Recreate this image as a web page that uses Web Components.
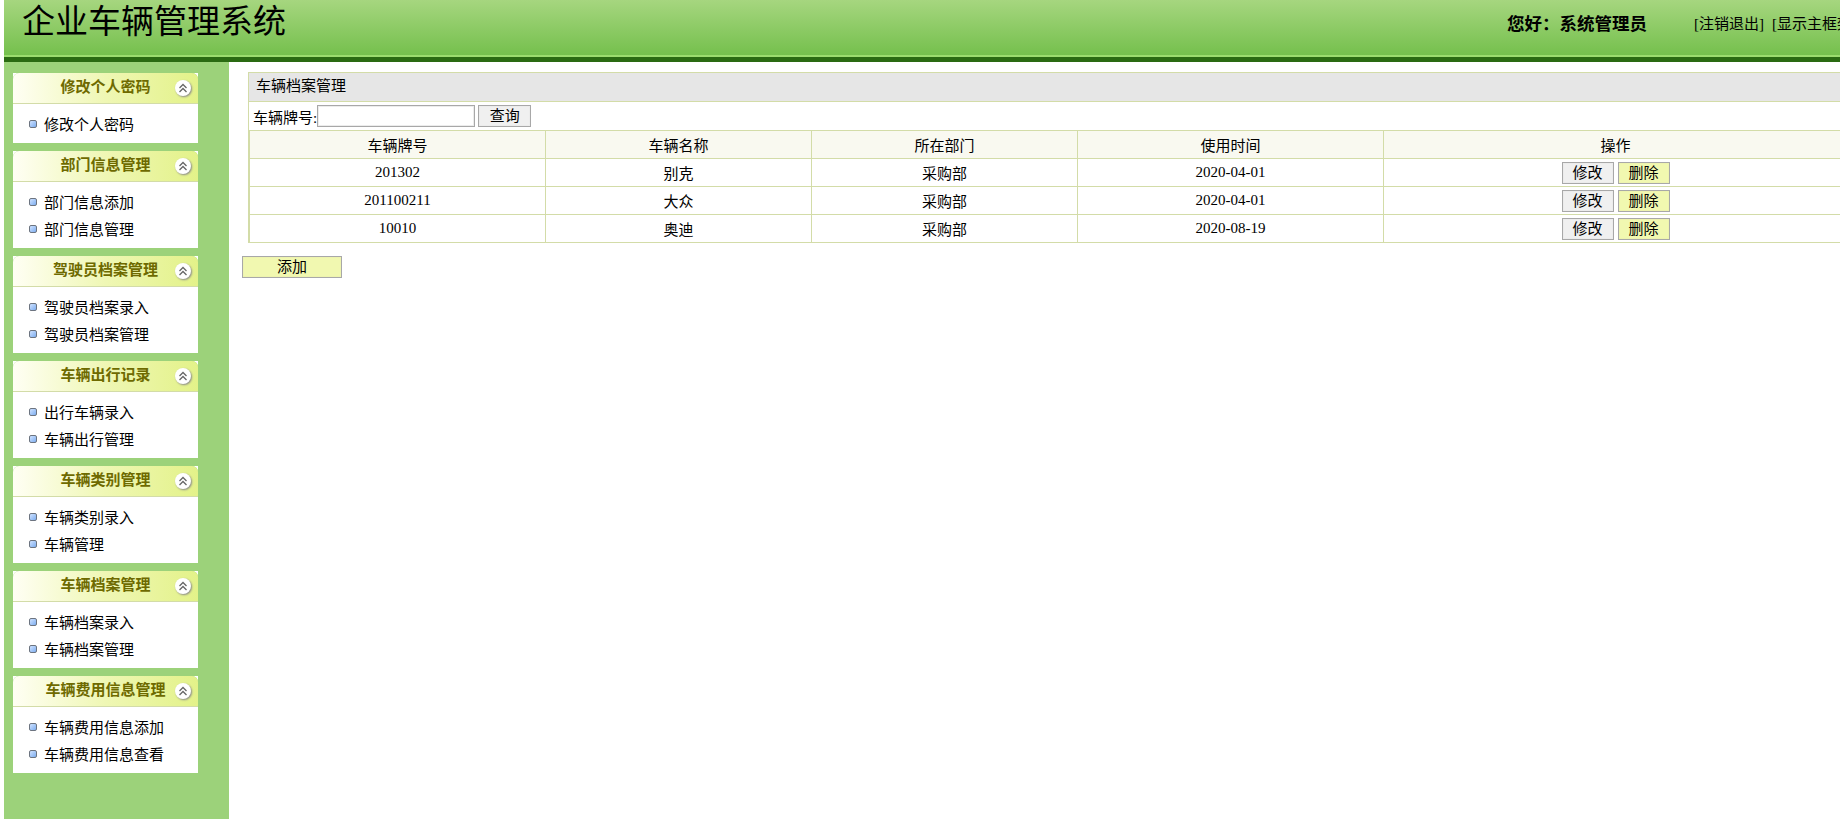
<!DOCTYPE html>
<html lang="zh">
<head>
<meta charset="utf-8">
<title>企业车辆管理系统</title>
<style>
    html, body { margin: 0; height: 100%; overflow: hidden; background: #fff; }
    body { font: 15px "Liberation Serif", "Noto Sans CJK SC", serif; color: #000; }
</style>
</head>
<body>
<app-shell>
    <app-header slot="header" system="企业车辆管理系统" user="系统管理员"></app-header>
    <side-menu slot="side">
        <side-panel heading="修改个人密码">
            <side-item>修改个人密码</side-item>
        </side-panel>
        <side-panel heading="部门信息管理">
            <side-item>部门信息添加</side-item>
            <side-item>部门信息管理</side-item>
        </side-panel>
        <side-panel heading="驾驶员档案管理">
            <side-item>驾驶员档案录入</side-item>
            <side-item>驾驶员档案管理</side-item>
        </side-panel>
        <side-panel heading="车辆出行记录">
            <side-item>出行车辆录入</side-item>
            <side-item>车辆出行管理</side-item>
        </side-panel>
        <side-panel heading="车辆类别管理">
            <side-item>车辆类别录入</side-item>
            <side-item>车辆管理</side-item>
        </side-panel>
        <side-panel heading="车辆档案管理">
            <side-item>车辆档案录入</side-item>
            <side-item>车辆档案管理</side-item>
        </side-panel>
        <side-panel heading="车辆费用信息管理">
            <side-item>车辆费用信息添加</side-item>
            <side-item>车辆费用信息查看</side-item>
        </side-panel>
    </side-menu>
    <vehicle-list>
        <vehicle-row head plate="车辆牌号" name="车辆名称" dept="所在部门" date="使用时间"></vehicle-row>
        <vehicle-row plate="201302" name="别克" dept="采购部" date="2020-04-01"></vehicle-row>
        <vehicle-row plate="201100211" name="大众" dept="采购部" date="2020-04-01"></vehicle-row>
        <vehicle-row plate="10010" name="奥迪" dept="采购部" date="2020-08-19"></vehicle-row>
    </vehicle-list>
</app-shell>

<script>
const btnStyle = `
    .btn {
        box-sizing: border-box;
        height: 22px;
        padding: 0;
        font: inherit;
        line-height: 18px;
        color: #000;
        border: 1px solid #a8a8a8;
        box-shadow: inset 0 0 0 1px #ececec;
        background: #f0f0f0;
    }
    .btn.yellow { background: #f1f8b0; box-shadow: inset 0 0 0 1px #eef4ae; }
`

class AppShell extends HTMLElement {
    constructor() {
        super()
        this.attachShadow({ mode: 'open' })
        this.shadowRoot.innerHTML = `
            <style>
                :host { display: flex; flex-direction: column; height: 100vh; padding-left: 4px; box-sizing: border-box; }
                .body { flex: 1; display: flex; min-height: 0; }
                main { flex: 1; min-width: 0; }
            </style>
            <slot name="header"></slot>
            <div class="body">
                <slot name="side"></slot>
                <main><slot></slot></main>
            </div>
        `
    }
}

class AppHeader extends HTMLElement {
    constructor() {
        super()
        this.attachShadow({ mode: 'open' })
        this.shadowRoot.innerHTML = `
            <style>
                :host {
                    display: flex;
                    justify-content: space-between;
                    box-sizing: border-box;
                    height: 62px;
                    padding-left: 18px;
                    overflow: hidden;
                    white-space: nowrap;
                    background: linear-gradient(#a6d67f, #75c04d 55px);
                    border-bottom: 5px solid #2a6a12;
                    box-shadow: inset 0 -2px 0 #9bdc6e;
                }
                h1 { margin: 0; font-size: 33px; font-weight: 400; line-height: 44px; }
                .right { display: flex; flex: none; width: 333px; padding-top: 14px; line-height: 20px; }
                b { font-size: 17.5px; width: 187px; flex: none; }
                span { flex: none; }
                .gap { width: 8px; }
            </style>
            <h1>${this.getAttribute('system')}</h1>
            <div class="right">
                <b>您好：系统管理员</b>
                <span>[注销退出]</span><span class="gap"></span><span>[显示主框架]</span>
            </div>
        `
    }
}

class SideMenu extends HTMLElement {
    constructor() {
        super()
        this.attachShadow({ mode: 'open' })
        this.shadowRoot.innerHTML = `
            <style>
                :host {
                    display: flex;
                    flex-direction: column;
                    gap: 8px;
                    flex: none;
                    box-sizing: border-box;
                    width: 225px;
                    padding: 11px 31px 0 9px;
                    background: #9cd27a;
                }
            </style>
            <slot></slot>
        `
    }
}

class SidePanel extends HTMLElement {
    constructor() {
        super()
        this.attachShadow({ mode: 'open' })
        this.shadowRoot.innerHTML = `
            <style>
                :host { display: block; background: #fff; }
                .title {
                    position: relative;
                    box-sizing: border-box;
                    height: 31px;
                    line-height: 29px;
                    text-align: center;
                    font-weight: 700;
                    color: #6e6a00;
                    border-radius: 6px 6px 0 0;
                    background: #9cd27a linear-gradient(90deg, #fffff4, #eff7b4 50%, #e3f289);
                    border-bottom: 1px solid #d3dca8;
                }
                .toggle {
                    position: absolute;
                    right: 7px;
                    top: 7px;
                    width: 16px;
                    height: 16px;
                    border-radius: 50%;
                    background: #fff;
                    box-shadow: 1px 1px 2px #8a8a8a;
                }
                svg { display: block; }
                .items { padding: 6px 0; }
            </style>
            <div class="title">
                ${this.getAttribute('heading')}
                <span class="toggle">
                    <svg width="16" height="16" viewBox="0 0 16 16" fill="none" stroke="#666" stroke-width="1.3">
                        <path d="M4.5 8 8 4.5 11.5 8M4.5 12 8 8.5 11.5 12"/>
                    </svg>
                </span>
            </div>
            <div class="items"><slot></slot></div>
        `
    }
}

class SideItem extends HTMLElement {
    constructor() {
        super()
        this.attachShadow({ mode: 'open' })
        this.shadowRoot.innerHTML = `
            <style>
                :host { display: flex; align-items: center; gap: 7px; height: 27px; padding-left: 16px; }
                i {
                    flex: none;
                    box-sizing: border-box;
                    width: 8px;
                    height: 8px;
                    border: 1px solid #6c7480;
                    border-radius: 2px;
                    background: linear-gradient(135deg, #cfe2ff, #7eaef0);
                }
            </style>
            <i></i><slot></slot>
        `
    }
}

class VehicleList extends HTMLElement {
    constructor() {
        super()
        this.attachShadow({ mode: 'open' })
        this.shadowRoot.innerHTML = `
            <style>
                :host { display: block; width: 1606px; padding: 10px 0 0 13px; }
                ${btnStyle}
                .box { margin-left: 6px; border: 1px solid #d3dca8; border-bottom: 0; }
                .caption {
                    box-sizing: border-box;
                    height: 29px;
                    padding-left: 7px;
                    line-height: 27px;
                    background: #e6e6e6;
                    border-bottom: 1px solid #d3dca8;
                }
                form { display: flex; align-items: center; gap: 3px; height: 28px; padding-left: 4px; margin: 0; }
                label { margin-right: -3px; }
                input {
                    box-sizing: border-box;
                    width: 158px;
                    height: 22px;
                    border: 1px solid #a8a8a8;
                    box-shadow: inset 0 0 0 1px #ececec;
                    background: #fff;
                }
                form .btn { width: 53px; }
                .add { width: 100px; margin-top: 14px; display: block; }
            </style>
            <div class="box">
                <div class="caption">车辆档案管理</div>
                <form>
                    <label>车辆牌号:</label>
                    <input type="text">
                    <button type="button" class="btn">查询</button>
                </form>
                <slot></slot>
            </div>
            <button type="button" class="btn yellow add">添加</button>
        `
    }
}

class VehicleRow extends HTMLElement {
    constructor() {
        super()
        this.attachShadow({ mode: 'open' })
        const head = this.hasAttribute('head')
        const ops = head ? '操作' : `
            <button type="button" class="btn">修改</button>
            <button type="button" class="btn yellow">删除</button>
        `
        this.shadowRoot.innerHTML = `
            <style>
                :host {
                    display: grid;
                    grid-template-columns: 296px 266px 266px 306px 1fr;
                    box-sizing: border-box;
                    height: 29px;
                    text-align: center;
                    border-top: 1px solid #d3dca8;
                    border-bottom: 1px solid #d3dca8;
                    margin-bottom: -1px;
                    background: ${head ? '#f9f9f0' : '#fff'};
                }
                ${btnStyle}
                div { display: flex; align-items: center; justify-content: center; border-left: 1px solid #d3dca8; }
                div:first-child { border-left: 0; }
                .ops { gap: 4px; }
                .btn { width: 52px; }
            </style>
            <div>${this.getAttribute('plate')}</div>
            <div>${this.getAttribute('name')}</div>
            <div>${this.getAttribute('dept')}</div>
            <div>${this.getAttribute('date')}</div>
            <div class="ops">${ops}</div>
        `
    }
}

window.customElements.define('app-shell', AppShell)
window.customElements.define('app-header', AppHeader)
window.customElements.define('side-menu', SideMenu)
window.customElements.define('side-panel', SidePanel)
window.customElements.define('side-item', SideItem)
window.customElements.define('vehicle-list', VehicleList)
window.customElements.define('vehicle-row', VehicleRow)
</script>
</body>
</html>
